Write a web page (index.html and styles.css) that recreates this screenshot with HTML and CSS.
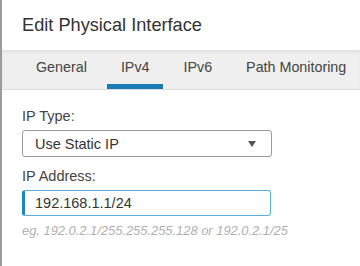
FILE: index.html
```html
<!DOCTYPE html>
<html lang="en">
<head>
    <meta charset="UTF-8">
    <meta name="viewport" content="width=device-width, initial-scale=1.0">
    <title>Edit Physical Interface</title>
    <link rel="stylesheet" href="styles.css">
</head>
<body>
    <div class="dialog">
        <div class="dialog-header">
            <h1>Edit Physical Interface</h1>
        </div>

        <!-- Tabs -->
        <div class="tabs">
            <div class="tab">General</div>
            <div class="tab active">IPv4</div>
            <div class="tab">IPv6</div>
            <div class="tab">Path Monitoring</div>
        </div>

        <!-- IPv4 form -->
        <div class="form">
            <label class="field-label">IP Type:</label>
            <div class="select">
                <span>Use Static IP</span>
                <svg class="caret" width="8" height="6" viewBox="0 0 8 6"><path d="M0 0h8L4 6z" fill="#555"/></svg>
            </div>

            <label class="field-label">IP Address:</label>
            <div class="input">192.168.1.1/24</div>
            <div class="hint">eg. 192.0.2.1/255.255.255.128 or 192.0.2.1/25</div>
        </div>
    </div>
</body>
</html>
```

FILE: styles.css
```css
body {
    margin: 0;
    font-family: "Liberation Sans", Arial, sans-serif;
    color: #333;
    background-color: #fff;
}
.dialog {
    height: 266px;
    border-left: 2px solid #9c9c9c;
    box-sizing: border-box;
    overflow: hidden;
}
.dialog-header {
    height: 50px;
    padding-left: 20px;
    display: flex;
    align-items: center;
}
.dialog-header h1 {
    margin: 0;
    font-size: 18.2px;
    font-weight: normal;
    color: #333;
}
.tabs {
    display: flex;
    gap: 6px;
    height: 38px;
    padding-left: 20px;
    background-color: #efefef;
    border-top: 1px solid #e2e2e2;
    border-bottom: 1px solid #dcdcdc;
    box-shadow: inset 0 2px 2px rgba(0, 0, 0, 0.04);
    overflow: hidden;
}
.tab {
    flex-shrink: 0;
    white-space: nowrap;
    padding: 0 14px;
    font-size: 14.3px;
    color: #444;
    line-height: 33px;
    border-bottom: 5px solid transparent;
}
.tab.active {
    border-bottom-color: #1a7cb6;
}
.form {
    padding: 18px 0 0 20px;
}
.field-label {
    display: block;
    font-size: 14.5px;
    color: #444;
    margin-bottom: 6px;
}
.select {
    width: 250px;
    height: 27px;
    box-sizing: border-box;
    border: 1px solid #9a9a9a;
    border-radius: 3px;
    display: flex;
    align-items: center;
    justify-content: space-between;
    padding: 0 15px 0 12px;
    font-size: 14.5px;
    color: #333;
    margin-bottom: 11px;
}
.input {
    width: 249px;
    height: 26px;
    box-sizing: border-box;
    border: 1px solid #5aaedb;
    border-left: 3px solid #1a86c4;
    border-radius: 3px;
    display: flex;
    align-items: center;
    padding-left: 10px;
    font-size: 14.5px;
    color: #333;
}
.hint {
    margin-top: 7px;
    font-size: 12.9px;
    font-style: italic;
    color: #b0b0b0;
}
```
